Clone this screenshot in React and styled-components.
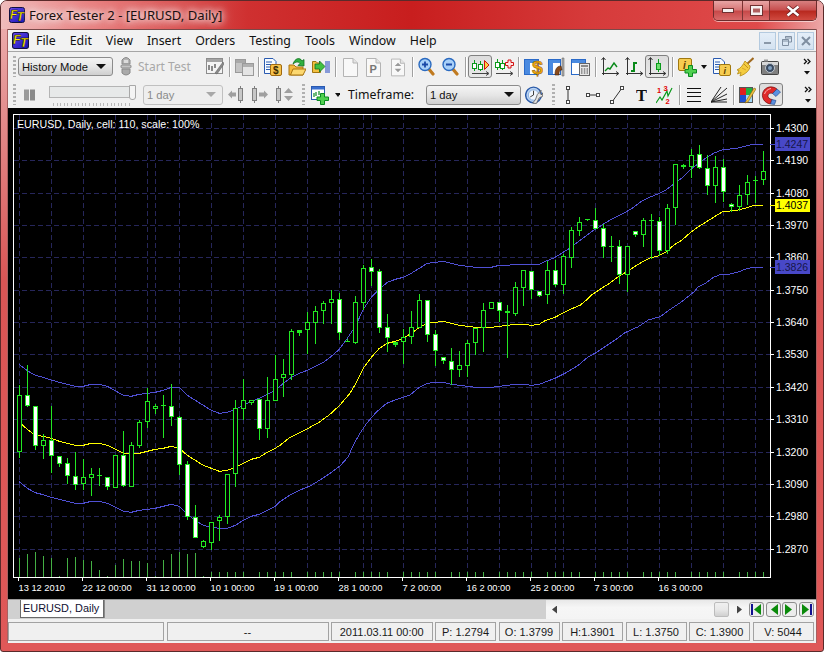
import React from "react";
import styled, { createGlobalStyle } from "styled-components";

const Global = createGlobalStyle`
  html, body { margin: 0; padding: 0; background: #fff; overflow: hidden; }
  * { box-sizing: border-box; }
`;

const UI = `"Noto Sans", "Open Sans", sans-serif`;
const ARIAL = `"Liberation Sans", Arial, sans-serif`;

const Window = styled.div`
  width: 824px; height: 652px; padding: 0 7px 8px; display: flex; flex-direction: column;
  border: 1px solid #5a2a2a; border-radius: 7px 7px 3px 3px; overflow: hidden;
  background: linear-gradient(180deg, #eeb4b4 0, #e28a8a 120px, #d95555 280px, #df5858 100%);
`;
const TitleBar = styled.div`
  height: 28px; flex: none; margin: 0 -7px; padding: 0 0 0 8px; display: flex; align-items: flex-start;
  background: linear-gradient(90deg, #efbcbc 0, #e88080 11%, #cf3030 30%, #c81e1e 50%, #d63b3b 72%, #df4a4a 92%, #eca8a8 100%);
`;
const TitleLogo = styled.div` margin-top: 6px; width: 16px; height: 16px; flex: none; `;
const TitleText = styled.div`
  margin: 5px 0 0 4px; font: 13.1px ${UI}; color: #1a1010; white-space: nowrap; flex: 1;
  text-shadow: 0 0 6px #fff, 0 0 10px #fff, 0 0 14px #fff;
`;
const Controls = styled.div`
  display: flex; height: 20px; margin-right: 6px; border: 1px solid #6d2b2b; border-top: none;
  border-radius: 0 0 5px 5px; overflow: hidden; box-shadow: 0 1px 0 rgba(255,255,255,.55);
`;
const CtrlBtn = styled.div`
  width: ${p => p.$w}px; display: flex; align-items: center; justify-content: center;
  border-left: ${p => (p.$first ? "none" : "1px solid #7b3333")};
  background: ${p => p.$close
    ? "linear-gradient(180deg,#d88080 0,#c85050 45%,#b92a20 55%,#d04a40 100%)"
    : "linear-gradient(180deg,#e8a5a5 0,#d87878 45%,#c84a4a 55%,#d86a6a 100%)"};
`;
const Client = styled.div`
  flex: 1; display: flex; flex-direction: column; background: #f0f0f0; min-height: 0;
  border: 1px solid #7a4a4a; border-width: 1px 0 0 0; width: 808px; margin-left: 0;
  box-shadow: -1px 0 0 #a86060, 1px 0 0 #a86060;
`;
const MenuBar = styled.div`
  height: 22px; flex: none; display: flex; align-items: center; padding: 0 2px 0 4px;
  background: #f2f2f2; border-bottom: 1px solid #a6a6a6;
`;
const MenuLogo = styled.div` width: 17px; height: 17px; flex: none; `;
const MenuItem = styled.div` padding: 0 7px; font: 12.35px ${UI}; color: #111; `;
const MdiGroup = styled.div` margin-left: auto; display: flex; gap: 2px; `;
const MdiBtn = styled.div`
  width: 17px; height: 18px; display: flex; align-items: center; justify-content: center;
  background: linear-gradient(180deg,#e4eef8,#d4e2f0); border: 1px solid #b4cadf;
`;
const Toolbar = styled.div`
  height: ${p => p.$h}px; flex: none; display: flex; align-items: center; padding-left: 5px; background: #f0f0f0;
`;
const Slot = styled.div`
  flex: none; width: ${p => p.$w}px; height: 100%; margin-left: ${p => p.$ml || 0}px;
  display: flex; align-items: center; justify-content: center;
`;
const Pressed = styled.div`
  flex: none; width: 24px; height: 23px; margin-left: ${p => p.$ml || 0}px; display: flex; align-items: center; justify-content: center;
  border: 1.5px solid #808080; border-radius: 3px; background: linear-gradient(180deg,#dcdcdc,#e8e8e8);
`;
const Sep = styled.div`
  flex: none; width: 1px; height: 20px; margin-left: ${p => p.$ml || 0}px; background: #a0a0a0; box-shadow: 1px 0 0 #fff;
`;
const Grip = styled.div`
  flex: none; width: 3px; height: 21px; margin-left: ${p => p.$ml || 0}px;
  background: repeating-linear-gradient(180deg,#b0b0b0 0,#b0b0b0 2px,transparent 2px,transparent 4px);
`;
const Combo = styled.div`
  flex: none; width: ${p => p.$w}px; height: ${p => p.$h}px; margin-left: ${p => p.$ml || 0}px;
  display: flex; align-items: center; justify-content: space-between; padding: 0 6px 0 3px;
  border: 1px solid ${p => (p.$off ? "#c0c0c0" : "#8c8c8c")}; border-radius: 3px;
  background: ${p => (p.$off ? "#eeeeee" : "linear-gradient(180deg,#f4f4f4 0,#e6e6e6 50%,#cfcfcf 100%)")};
  font: 11.2px ${ARIAL}; color: ${p => (p.$off ? "#8a8a8a" : "#111")};
`;
const ComboArrow = styled.span`
  width: 0; height: 0; border: 4px solid transparent; border-bottom: none;
  border-left-width: 5px; border-right-width: 5px; border-top: 5px solid ${p => (p.$off ? "#a8a8a8" : "#111")};
`;
const ToolLabel = styled.div`
  flex: none; width: ${p => p.$w}px; margin-left: ${p => p.$ml}px; font: ${p => p.$size}px ${UI};
  color: ${p => p.$color}; white-space: nowrap;
`;
const SliderBox = styled.div`
  position: relative; flex: none; width: 87px; height: 26px; margin-left: 14px;
`;
const SliderTrack = styled.div`
  position: absolute; left: 0; right: 0; top: 4px; height: 12px; background: #e7e9e9; border: 1px solid #b4b4b4;
`;
const SliderThumb = styled.div`
  position: absolute; right: 0; top: 3px; width: 7px; height: 15px; background: #f4f4f4;
  border: 1px solid #a8a8a8; border-radius: 0 0 3px 3px;
`;
const SliderTicks = styled.div`
  position: absolute; left: 4px; right: 4px; top: 21px; height: 3px;
  background: repeating-linear-gradient(90deg,#b8b8b8 0,#b8b8b8 1px,transparent 1px,transparent 3.6px);
`;
const ChartPane = styled.div` height: 491px; flex: none; background: #000; `;
const ChartSvg = styled.svg`
  display: block; font-family: ${ARIAL};
`;
const TabRow = styled.div`
  height: 20px; flex: none; display: flex; border-top: 1px solid #9c9c9c;
`;
const TabStrip = styled.div` width: 538px; background: #d0d0d0; padding-left: 12px; flex: none; `;
const Tab = styled.div`
  width: 84px; height: 18px; background: #fff; border: 1px solid #6a6a6a; border-top: none; padding-left: 2px;
  font: 10.9px/17px ${ARIAL}; color: #101030; box-shadow: 1px 0 0 #8a8a8a; white-space: nowrap;
`;
const ScrollTrack = styled.div`
  flex: 1; display: flex; align-items: center; padding: 0 0 0 6px;
  background: linear-gradient(180deg,#e8e8e8,#f6f6f6 40%,#f4f4f4);
`;
const ArrowBtn = styled.div`
  flex: none; width: 5px; height: 8px; background: ${p => p.$c || "#444"};
  clip-path: polygon(${p => (p.$dir === "l" ? "100% 0,100% 100%,0 50%" : "0 0,0 100%,100% 50%")});
  margin-left: ${p => p.$ml || 0}px;
`;
const ScrollThumb = styled.div`
  flex: none; width: 15px; height: 15px; margin-left: 157px; border: 1px solid #bcbcbc; border-radius: 2px;
  background: linear-gradient(180deg,#f0f0f0 0,#e8e8e8 50%,#d0d0d0 100%);
`;
const NavBtn = styled.div`
  flex: none; width: 15px; height: 15px; margin-left: ${p => p.$ml ?? 1.5}px; border: 1px solid #8c8c8c; border-radius: 3px;
  background: #ececec; display: flex; align-items: center; justify-content: center;
`;
const StatusBar = styled.div`
  margin-top: 3px; height: 19px; flex: none; display: flex; gap: 2.5px; padding-right: 1px;
`;
const Pane = styled.div`
  flex: none; width: ${p => p.$w}px; height: 19px; border: 1px solid #a2a2a2; background: #f0f0f0;
  display: flex; align-items: center; justify-content: center; font: 11px ${ARIAL}; color: #1a1a1a; white-space: nowrap;
`;

/* ---------- icons ---------- */
const Ic = ({ w, h = 20, children }) => (
  <svg width={w} height={h} viewBox={`0 0 ${w} ${h}`} style={{ display: "block" }}>{children}</svg>
);
const Logo = ({ s }) => (
  <svg width={s} height={s} viewBox="0 0 16 16" style={{ display: "block" }}>
    <defs><linearGradient id={`lg${s}`} x1="0" y1="0" x2="1" y2="1"><stop offset="0" stopColor="#6a4af0" /><stop offset="1" stopColor="#1212b0" /></linearGradient></defs>
    <rect x=".5" y=".5" width="15" height="15" rx="2" fill={`url(#lg${s})`} stroke="#101040" />
    <text x="1" y="11.5" fontFamily={ARIAL} fontWeight="700" fontStyle="italic" fontSize="12" fill="#ffee00" stroke="#000" strokeWidth=".4">F</text>
    <text x="7.5" y="14" fontFamily={ARIAL} fontWeight="700" fontStyle="italic" fontSize="12" fill="#ffee00" stroke="#000" strokeWidth=".4">T</text>
  </svg>
);
const Stopper = () => (
  <Ic w={14} h={22}>
    <path d="M3 4 Q7 -1 11 4 L11 8 L3 8Z" fill="#b4b4b4" stroke="#888" />
    <rect x="2" y="9" width="10" height="3" rx="1" fill="#c4c4c4" stroke="#8c8c8c" />
    <path d="M3 13 L11 13 L11 17 Q7 21 3 17Z" fill="#aaa" stroke="#888" />
    <rect x="5" y="4" width="4" height="3" fill="#dcdcdc" />
  </Ic>
);
const ChartEdit = () => (
  <Ic w={18}>
    <rect x=".5" y="1.5" width="16" height="15" fill="#f4f4f4" stroke="#8c8c8c" />
    <rect x="1" y="2" width="15" height="3" fill="#a4a4a4" />
    <path d="M3 13 V8 M6 14 V9 M9 11 V7" stroke="#666" strokeWidth="1.5" />
    <path d="M9 16 L17 5 L18 7 L11 17Z" fill="#8a8a8a" stroke="#666" strokeWidth=".6" />
  </Ic>
);
const GrayWindows = () => (
  <Ic w={19}>
    <rect x=".5" y="2.5" width="10" height="13" fill="#c4c4c4" stroke="#9a9a9a" />
    <rect x="7.5" y="6.5" width="11" height="12" fill="#e4e4e4" stroke="#9a9a9a" />
    <rect x="1" y="3" width="9" height="3" fill="#a8a8a8" /><rect x="8" y="7" width="10" height="3" fill="#b0b0b0" />
  </Ic>
);
const DocDollar = () => (
  <Ic w={19}>
    <path d="M1.5 1.5 H10 L13 4.5 V16.5 H1.5Z" fill="#f6fbff" stroke="#2a5ab0" />
    <path d="M3 5 H9 M3 7.5 H8 M3 10 H7 M3 12.5 H7" stroke="#2a5ab0" />
    <rect x="7.5" y="7.5" width="11" height="11" rx="1.5" fill="#f6c24c" stroke="#a06a10" />
    <text x="10" y="16.5" fontFamily={ARIAL} fontWeight="700" fontSize="10" fill="#3a2a00">$</text>
  </Ic>
);
const FolderArrow = () => (
  <Ic w={18} h={20}>
    <path d="M1 8 H6 L8 10 H15 V18 H1Z" fill="#f4b83c" stroke="#a87410" />
    <path d="M2.5 18 L5 12 H18 L15 18Z" fill="#fcd870" stroke="#a87410" />
    <path d="M5 7 C7 1 12 0 14 4 L16 2.5 L16 9 L10 8.5 L12 6.5 C10.5 4.5 8 4.5 5 7Z" fill="#30b040" stroke="#107020" strokeWidth=".8" />
  </Ic>
);
const FolderBars = () => (
  <Ic w={18} h={16}>
    <path d="M.5 2.5 H4 L5.5 4 H8.5 V13.5 H.5Z" fill="#f2c040" stroke="#a07410" />
    <path d="M3 5 H7.5 V2 L13 7.5 L7.5 13 V10 H3Z" fill="#40c040" stroke="#107020" strokeWidth=".8" />
    <path d="M14 2 V14 M16 2 V14 M18 2 V14" stroke="#4060c8" strokeWidth="1.2" />
  </Ic>
);
const GrayDoc = ({ children }) => (
  <Ic w={15}>
    <path d="M.5 1.5 H10 L14.5 6 V19.5 H.5Z" fill="#f8f8f8" stroke="#b4b4b4" />
    <path d="M10 1.5 V6 H14.5" fill="#e4e4e4" stroke="#b4b4b4" />
    {children}
  </Ic>
);
const Magnifier = ({ plus }) => (
  <Ic w={17} h={19}>
    <path d="M10 11 L15 17" stroke="#c07a20" strokeWidth="3.2" strokeLinecap="round" />
    <circle cx="7" cy="7.5" r="6" fill="#a8d0f8" stroke="#2a6ac0" strokeWidth="1.4" />
    <path d="M4 7.5 H10" stroke="#1a4aa8" strokeWidth="1.8" />
    {plus && <path d="M7 4.5 V10.5" stroke="#1a4aa8" strokeWidth="1.8" />}
  </Ic>
);
const Cndl = ({ x, t, b, wt, wb, c = "#0a9a1a", fill }) => (
  <g>
    <path d={`M${x} ${wt} V${wb}`} stroke={c} />
    <rect x={x - 2} y={t} width="4" height={b - t} fill={fill || "#fff"} stroke={c} />
  </g>
);
const PlayChart = () => (
  <Ic w={19} h={19}>
    <Cndl x={3.5} t={6.5} b={11.5} wt={3} wb={14} /><Cndl x={9.5} t={7.5} b={12.5} wt={4} wb={14} />
    <path d="M13.5 3.5 L18 8 L13.5 12.5Z" fill="#ffd040" stroke="#d01010" />
    <path d="M1 16.5 H17 M15 14.5 L18 16.5 L15 18.5" stroke="#444" fill="none" />
  </Ic>
);
const PlusChart = () => (
  <Ic w={19} h={19}>
    <Cndl x={2.5} t={5.5} b={10.5} wt={2} wb={13} /><Cndl x={7.5} t={6.5} b={11.5} wt={3} wb={13} />
    <path d="M13 3 H16 V5.5 H18.5 V8.5 H16 V11 H13 V8.5 H10.5 V5.5 H13Z" fill="#ffe0e0" stroke="#d01010" />
    <path d="M1 16.5 H17 M15 14.5 L18 16.5 L15 18.5" stroke="#444" fill="none" />
  </Ic>
);
const DollarWin = () => (
  <Ic w={19}>
    <rect x=".5" y="2.5" width="14" height="15" fill="#fff" stroke="#2a6ac8" />
    <rect x="1" y="3" width="13" height="3" fill="#4a8ae0" />
    <rect x="1" y="6" width="5" height="11" fill="#4a8ae0" />
    <text x="8" y="17" fontFamily={ARIAL} fontWeight="700" fontSize="19" fill="#f0a810" stroke="#8a5a00" strokeWidth=".5" textLength="11" lengthAdjust="spacingAndGlyphs">$</text>
  </Ic>
);
const ToolWin = () => (
  <Ic w={18}>
    <rect x=".5" y="2.5" width="12" height="15" fill="#fff" stroke="#2a6ac8" />
    <rect x="1" y="3" width="11" height="3" fill="#4a8ae0" /><rect x="1" y="6" width="4" height="11" fill="#4a8ae0" />
    <path d="M14 1 H16 V19 H14Z" fill="#b0b0b0" stroke="#555" strokeWidth=".5" />
    <path d="M7 18 C7 12 9 9 13 9 L14 13 C11 13 11 15 11 18Z" fill="#8a4a1a" stroke="#402008" strokeWidth=".6" />
  </Ic>
);
const CalcWin = () => (
  <Ic w={19}>
    <rect x=".5" y="2.5" width="14" height="15" fill="#fff" stroke="#2a6ac8" />
    <rect x="1" y="3" width="13" height="3" fill="#4a8ae0" />
    <rect x="8.5" y="6.5" width="10" height="12" fill="#e8e8e8" stroke="#666" />
    <rect x="10" y="8" width="7" height="2" fill="#8a8a8a" />
    <path d="M10 12 H11.5 M12.8 12 H14.3 M15.6 12 H17 M10 14 H11.5 M12.8 14 H14.3 M15.6 14 H17 M10 16 H11.5 M12.8 16 H14.3 M15.6 16 H17" stroke="#444" />
  </Ic>
);
const Axes = ({ w = 18, children }) => (
  <Ic w={w} h={19}>
    <path d="M2.5 18 V1 M.5 3 L2.5 .5 L4.5 3 M1 16.5 H17.5 M15 14.5 L17.8 16.5 L15 18.5" stroke="#333" fill="none" />
    {children}
  </Ic>
);
const InfoBox = () => (
  <Ic w={19}>
    <rect x=".5" y="1.5" width="13" height="12" rx="1.5" fill="#f6cc50" stroke="#a07810" />
    <text x="5" y="11.5" fontFamily={ARIAL} fontWeight="700" fontStyle="italic" fontSize="10" fill="#5a4000">i</text>
    <path d="M10.5 8.5 H14.5 V12.5 H18.5 V16 H14.5 V19.5 H10.5 V16 H7 V12.5 H10.5Z" fill="#50d050" stroke="#0a8a20" />
  </Ic>
);
const DocInfo = () => (
  <Ic w={18}>
    <path d="M.5 1.5 H8 L11.5 5 V16.5 H.5Z" fill="#f6fbff" stroke="#2a5ab0" />
    <path d="M2 5 H7 M2 7.5 H7 M2 10 H6 M2 12.5 H6" stroke="#2a5ab0" />
    <rect x="6.5" y="7.5" width="11" height="11" rx="1.5" fill="#f6cc50" stroke="#a07810" />
    <text x="10.5" y="16.5" fontFamily={ARIAL} fontWeight="700" fontStyle="italic" fontSize="9" fill="#5a4000">i</text>
  </Ic>
);
const Broom = () => (
  <Ic w={17}>
    <path d="M16.5 1 L10 7" stroke="#a06a20" strokeWidth="2" />
    <path d="M8 4 L13 9 C13 13 9 17 3 19 L4 15.5 L0.5 17 L2 13.5 L0 13 C4 11 6 8 8 4Z" fill="#f4cc40" stroke="#b48a10" strokeWidth=".8" />
    <path d="M7 7 L11 11" stroke="#c09020" />
    <path d="M5 11 L9 13" stroke="#d8a828" />
  </Ic>
);
const Camera = () => (
  <Ic w={18}>
    <rect x=".5" y="4.5" width="17" height="13" rx="1" fill="#808080" stroke="#444" />
    <rect x="1" y="5" width="16" height="3" fill="#d8d8d8" />
    <circle cx="9" cy="11" r="4.5" fill="#3a4a60" stroke="#c0c8d0" />
    <circle cx="9" cy="11" r="2" fill="#80a0c0" />
    <rect x="3" y="2.5" width="4" height="2" fill="#999" />
  </Ic>
);
const Chevrons = () => (
  <Ic w={8} h={22}>
    <path d="M1 3 L3.5 5.5 L1 8 M4.5 3 L7 5.5 L4.5 8" stroke="#111" strokeWidth="1.3" fill="none" />
    <path d="M1 15 H7 L4 18.5Z" fill="#111" />
  </Ic>
);
const PauseIc = () => (
  <Ic w={11} h={12}><rect width="5" height="11" y=".5" fill="#9a9a9a" /><rect x="6" width="5" height="11" y=".5" fill="#8a8a8a" /></Ic>
);
const GrayC = ({ x }) => <rect x={x + .5} y="3.5" width="4" height="12" fill="#c8c8c8" stroke="#808080" />;
const StepLeft = () => (
  <Ic w={16}><path d="M0 9.5 L4 5.5 V7.5 H8 V11.5 H4 V13.5Z" fill="#a0a0a0" /><path d="M12.5 1 V18" stroke="#808080" /><GrayC x={10} /></Ic>
);
const StepRight = () => (
  <Ic w={16}><path d="M2.5 1 V18" stroke="#808080" /><GrayC x={0} /><path d="M16 9.5 L12 5.5 V7.5 H7 V11.5 H12 V13.5Z" fill="#a0a0a0" /></Ic>
);
const StepUpDown = () => (
  <Ic w={17}><path d="M2.5 1 V18" stroke="#808080" /><GrayC x={0} /><path d="M8 8 L12.5 3 L17 8Z M8 11 L12.5 16 L17 11Z" fill="#a0a0a0" /></Ic>
);
const ChartPlus = () => (
  <Ic w={18}>
    <rect x=".5" y="1.5" width="13" height="13" fill="#fff" stroke="#2a5ab0" />
    <rect x="1" y="2" width="12" height="2.5" fill="#3a70d0" />
    <path d="M3 12 V8 M5 11 V7 M8 10 V6" stroke="#0a8a20" strokeWidth="1.2" />
    <path d="M9.5 8.5 H13.5 V12 H17.5 V15.5 H13.5 V19.5 H9.5 V15.5 H6 V12 H9.5Z" fill="#50d050" stroke="#0a8a20" />
  </Ic>
);
const ClockTool = () => (
  <Ic w={19}>
    <circle cx="9" cy="10" r="8.3" fill="#b8d2f2" stroke="#2a5aa8" strokeWidth="1.5" />
    <circle cx="9" cy="10" r="5.5" fill="#f0f6fd" stroke="#8ab0e0" />
    <path d="M9 5.5 V10 L5.5 12" stroke="#333" fill="none" />
    <path d="M8 18.5 L11 15 L13 9.5 L17 5 L16 8.5 L17.5 10 L19 7.5 L18.5 11.5 L15 13 L12 19Z" fill="#e4e4e4" stroke="#505050" strokeWidth=".8" />
  </Ic>
);
const Handle = ({ x, y }) => <rect x={x - 1.5} y={y - 1.5} width="3" height="3" fill="#fff" stroke="#444" />;
const VLine = () => <Ic w={12}><path d="M6 3 V17" stroke="#333" /><Handle x={6} y={3} /><Handle x={6} y={17} /></Ic>;
const HLine = () => <Ic w={14}><path d="M2 10 H12" stroke="#333" /><Handle x={2} y={10} /><Handle x={12} y={10} /></Ic>;
const Trend = () => <Ic w={14}><path d="M2 17 L12 3" stroke="#333" /><Handle x={2} y={17} /><Handle x={12} y={3} /></Ic>;
const TTool = () => <Ic w={11} h={18}><text x="0" y="15" fontFamily={`"Liberation Serif", serif`} fontWeight="700" fontSize="16.5" fill="#111">T</text></Ic>;
const Fibo = () => (
  <Ic w={17}>
    <path d="M0 18 L4 12 L6 15 L11 6 L12 11 L16 3" stroke="#0a9a1a" strokeWidth="1.2" fill="none" />
    <text x="1" y="8" fontFamily={ARIAL} fontWeight="700" fontSize="7.5" fill="#e00000">1</text>
    <text x="7.5" y="6" fontFamily={ARIAL} fontWeight="700" fontSize="7.5" fill="#e00000">3</text>
    <text x="9.5" y="19" fontFamily={ARIAL} fontWeight="700" fontSize="7.5" fill="#e00000">2</text>
  </Ic>
);
const HLines = () => <Ic w={14}><path d="M0 3.5 H14 M0 7.5 H14 M0 11.5 H14 M0 16.5 H14" stroke="#111" /></Ic>;
const Fan = () => <Ic w={16}><path d="M0 17 L16 3 M0 17 L16 9 M0 17 L16 14 M0 17 H16 M0 17 L10 2" stroke="#222" /></Ic>;
const Paint = () => (
  <Ic w={17}>
    <rect x=".5" y="2.5" width="13" height="15" fill="#f0f0f0" stroke="#555" />
    <rect x="1" y="3" width="6" height="7" fill="#e02020" /><rect x="7" y="3" width="6" height="7" fill="#20b040" />
    <rect x="1" y="10" width="6" height="7" fill="#2050d0" /><rect x="7" y="10" width="6" height="7" fill="#a0d8f8" />
    <path d="M7 16 L15 3 L17 4 L9 17 L6 18Z" fill="#f0c040" stroke="#806010" strokeWidth=".6" />
  </Ic>
);
const Magnet = () => (
  <Ic w={20}>
    <path d="M9.5 19 C3 18 0 12 2 7 C4 2 11 0 16 4 L11.5 8.5 C9.5 7.5 7.5 8.5 7 10 C6.5 12 8 14 11 14.5Z" fill="#e02828" stroke="#701010" strokeWidth=".7" />
    <path d="M11.5 8.5 L16 4 L19.5 7 L15 11.5Z" fill="#5a90e0" stroke="#204080" strokeWidth=".6" />
    <path d="M11 14.5 L9.5 19 L13.5 19.5 L15 15.5Z" fill="#5a90e0" stroke="#204080" strokeWidth=".6" />
    <path d="M3.5 9 C4.5 6 7 4 10 3.5" stroke="#ffb0b0" fill="none" />
  </Ic>
);
const NavIcon = ({ dir, bar }) => (
  <Ic w={13} h={13}>
    {bar && <rect x={dir === "l" ? 1 : 10} y="1" width="2" height="11" fill="#101090" />}
    <path d={dir === "l" ? "M11 1 V12 L4 6.5Z" : "M2 1 V12 L9 6.5Z"} fill="#0a8a0a" />
  </Ic>
);

/* ---------- chart data, read off the picture in zoomed coordinates ---------- */
const C5 = [[132,166,334,352,"h"],[72,166,196,198,"w"],[198,199,314,326,"w"],[280,301,314,354,"h"],[195,301,344,396,"w"],[349,349,368,378,"w"],[351,370,406,430,"w"],[333,409,431,446,"w"],[354,412,428,446,"h"],[381,403,410,465,"h"],[381,406,406,435,"f"],[408,412,439,446,"w"],[346,346,440,440,"h"],[270,346,434,438,"w"],[304,316,437,438,"h"],[238,247,314,320,"h"],[141,184,244,262,"h"],[190,199,205,220,"h"],[162,196,196,290,"f"],[129,199,229,255,"w"],[225,232,373,402,"w"],[360,373,529,538,"w"],[492,532,592,592,"w"],[598,604,619,622,"h"],[547,547,607,628,"h"],[522,532,541,600,"h"],[403,403,529,549,"h"],[178,205,400,438,"h"],[114,181,203,237,"h"],[178,179,186,192,"h"],[178,178,265,297,"w"],[108,181,265,291,"h"]];
const C6 = [[343,418,479,481,"h"],[354,403,412,468,"h"],[265,274,401,418,"h"],[271,271,275,284,"s"],[213,247,268,340,"h"],[195,214,245,308,"h"],[181,190,211,250,"h"],[148,178,187,250,"h"],[156,178,275,297,"w"],[295,303,303,304,"f"],[166,187,305,310,"h"],[72,85,185,206,"h"],[54,82,92,135,"w"],[84,94,262,276,"w"],[220,262,292,333,"w"],[306,307,312,318,"s"],[264,292,304,368,"h"],[210,262,289,309,"h"],[159,181,260,262,"h"],[181,181,281,303,"w"],[267,283,329,375,"w"],[348,352,361,368,"w"],[321,364,388,432,"w"],[331,376,388,408,"h"],[297,310,374,408,"h"],[264,265,307,343,"h"],[186,211,262,333,"h"],[187,187,203,205,"h"],[183,187,211,244,"w"],[192,214,217,351,"s"],[124,142,218,225,"h"],[88,91,140,195,"h"],[90,94,148,175,"w"]];
const C7 = [[524,527,539,542,"w"],[435,466,538,565,"h"],[432,466,506,514,"w"],[415,424,506,534,"h"],[334,346,425,456,"h"],[304,322,344,360,"h"],[310,313,313,316,"f"],[276,316,338,340,"w"],[323,340,394,426,"w"],[360,394,394,437,"f"],[372,394,478,504,"w"],[394,394,478,527,"h"],[349,349,358,362,"w"],[306,316,358,393,"h"],[294,316,316,428,"f"],[304,319,406,420,"w"],[265,280,406,414,"h"],[148,148,277,327,"h"],[145,151,154,160,"s"],[99,121,154,186,"h"],[87,118,157,160,"w"],[118,160,211,237,"w"],[121,157,211,260,"h"],[129,157,227,259,"w"],[262,268,274,288,"w"],[208,241,274,286,"h"],[178,202,238,268,"h"],[181,196,196,262,"f"],[105,169,193,207,"h"]];
const G = (oy, list) => list.map(([a, b, c, d, k]) => ({ wt: oy + a / 3, t: oy + b / 3, b: oy + c / 3, wb: oy + d / 3, k }));
const candles = [...G(340, C5), ...G(240, C6), ...G(115, C7)];

const P = (ox, oy, pts) => pts.map(([x, y]) => `${(ox + x / 3).toFixed(1)},${(oy + y / 3).toFixed(1)}`);
const upper = [
  ...P(10, 340, [[28,74],[52,92],[76,106],[100,112],[124,120],[148,127],[172,133],[196,139],[220,139],[244,133],[268,133],[292,139],[316,152],[340,166],[364,169],[388,163],[412,160],[436,157],[460,151],[484,142],[508,142],[532,166],[556,181],[580,196],[604,211],[628,220],[652,217],[676,208],[700,196],[724,184],[748,175],[772,163],[796,151]]),
  ...P(270, 240, [[40,430],[64,412],[88,400],[112,391],[136,379],[160,367],[184,349],[208,328],[232,295],[256,259],[280,208],[304,172],[328,148],[352,127],[376,118],[400,112],[424,100],[448,85],[472,70],[496,67],[520,64],[544,70],[568,76],[592,79],[616,82],[640,82],[664,82],[688,76],[712,76],[736,73],[760,73],[784,73],[808,73]]),
  ...P(530, 115, [[48,438],[72,429],[96,414],[120,399],[144,381],[168,363],[192,345],[216,330],[240,315],[264,303],[288,291],[312,276],[336,258],[360,246],[384,237],[408,225],[432,207],[456,189],[480,165],[504,147],[528,129],[552,114],[576,105],[600,102],[624,99],[648,93],[672,87],[700,87]]),
].join(" ");
const middle = [
  ...P(10, 340, [[28,247],[52,268],[76,286],[100,289],[124,295],[148,304],[172,310],[196,316],[220,316],[244,310],[268,310],[292,316],[316,328],[340,340],[364,343],[388,340],[412,334],[436,328],[460,325],[484,319],[508,325],[532,346],[556,361],[580,376],[604,385],[628,394],[652,391],[676,382],[700,370],[724,358],[748,352],[772,337],[796,325],[810,316]]),
  ...P(270, 390, [[60,142],[90,128],[120,112],[150,95],[180,73],[210,45],[240,10]]),
  ...P(270, 240, [[256,433],[280,385],[304,352],[328,325],[352,310],[376,304],[400,295],[424,280],[448,262],[472,250],[496,247],[520,244],[544,250],[568,256],[592,259],[616,262],[640,262],[664,262],[688,259],[712,256],[736,253],[760,253],[784,256],[808,253]]),
  ...P(535, 290, [[30,92],[60,82],[90,66],[120,52],[135,46],[150,34],[170,15],[192,0]]),
  ...P(530, 115, [[216,519],[240,504],[264,486],[288,471],[312,456],[336,441],[360,429],[384,423],[408,411],[432,390],[456,375],[480,354],[504,336],[528,321],[552,306],[576,291],[600,288],[624,285],[648,279],[672,271],[700,270]]),
].join(" ");
const lower = [
  ...P(10, 340, [[28,425],[52,445],[76,458],[100,464],[124,472],[148,478],[172,484],[196,490],[220,490],[244,484],[268,484],[292,490],[316,502],[340,514],[364,517],[388,511],[412,508],[436,505],[460,499],[484,493],[508,499],[532,523],[556,541],[580,556],[604,562],[628,565],[652,565],[676,556],[700,541],[724,529],[748,523],[772,511],[796,499]]),
  ...P(270, 390, [[30,335],[60,315],[90,300],[120,288],[150,270],[180,250],[210,228],[235,200],[250,165],[270,130],[290,100],[320,65],[350,40],[380,28],[420,15]]),
  ...P(270, 240, [[448,442],[472,430],[496,427],[520,427],[544,433],[568,436],[592,439],[616,442],[640,442],[664,442],[688,439],[712,436],[736,433],[760,433],[784,436],[808,433]]),
  ...P(535, 290, [[60,265],[90,250],[130,226],[160,200],[180,190],[210,170],[240,150],[270,128],[310,110],[340,90],[375,80],[400,62],[440,35],[480,3]]),
  ...P(530, 115, [[504,516],[528,504],[552,486],[576,477],[600,477],[624,471],[648,462],[672,456],[700,456]]),
].join(" ");

const volTops = [69,57,51,63,69,124,69,66,75,78,105,123,90,72,78,78,84,124,75,57,51,57,54,124];
const GREEN = "#22e822";
const prices = ["1.4300","1.4190","1.4080","1.3970","1.3860","1.3750","1.3640","1.3530","1.3420","1.3310","1.3200","1.3090","1.2980","1.2870"];
const gridY = prices.map((_, i) => Math.floor(128.3 + i * 32.38) + .5);
const gridX = [...Array.from({ length: 24 }, (_, k) => 19.5 + 32 * k), 155.5, 363.5, 555.5];
const dates = ["13 12 2010","22 12 00:00","31 12 00:00","10 1 00:00","19 1 00:00","28 1 00:00","7 2 00:00","16 2 00:00","25 2 00:00","7 3 00:00","16 3 00:00"];
const snap = v => Math.round(v) + .5;

const Chart = () => (
  <ChartSvg width="808" height="491" viewBox="8 108 808 491">
    <g stroke="#26265a" strokeDasharray="5 3" shapeRendering="crispEdges">
      {gridY.map(y => <line key={y} x1="14" x2="770" y1={y} y2={y} />)}
      {gridX.map(x => <line key={x} x1={x} x2={x} y1="115" y2="577" />)}
    </g>
    <g stroke="#44b044" shapeRendering="crispEdges">
      {candles.map((_, i) => {
        if (i % 6 === 5 && i > 23) return null;
        const top = i < volTops.length ? 535 + volTops[i] / 3 : 572;
        const x = 19.5 + 8 * i;
        return <line key={i} x1={x} x2={x} y1={top} y2="577" />;
      })}
    </g>
    <polyline points={upper} fill="none" stroke="#5050d4" shapeRendering="crispEdges" />
    <polyline points={lower} fill="none" stroke="#5050d4" shapeRendering="crispEdges" />
    <polyline points={middle} fill="none" stroke="#ffff00" shapeRendering="crispEdges" />
    <g shapeRendering="crispEdges">
      {candles.map((c, i) => {
        const x = 19.5 + 8 * i;
        const t = snap(c.t), b = snap(c.b);
        return (
          <g key={i}>
            <line x1={x} x2={x} y1={snap(c.wt)} y2={snap(c.wb)} stroke={GREEN} />
            {c.k === "f"
              ? <line x1={x - 2.5} x2={x + 2.5} y1={t} y2={t} stroke={GREEN} />
              : <rect x={x - 2} y={t} width="4" height={Math.max(b - t, 1)} stroke={GREEN}
                  fill={c.k === "h" ? "#000" : c.k === "w" ? "#fff" : GREEN} />}
          </g>
        );
      })}
    </g>
    <path d="M13.5 577.5 V114.5 H770.5 V577.5 H13.5" fill="none" stroke="#fff" shapeRendering="crispEdges" />
    <g stroke="#fff" shapeRendering="crispEdges">
      {gridY.map(y => <line key={y} x1="770" x2="774" y1={y} y2={y} />)}
      {dates.map((_, i) => <line key={i} x1={18.5 + 64 * i} x2={18.5 + 64 * i} y1="577" y2="581" />)}
    </g>
    <g fill="#fff" fontSize="10.5">
      <text x="17" y="128" fontSize="10.65">EURUSD, Daily, cell: 110, scale: 100%</text>
      {prices.map((p, i) => <text key={p} x="776" y={gridY[i] + 3.5}>{p}</text>)}
    </g>
    <g fill="#fff">
      {dates.map((d, i) => <text key={d} x={18.5 + 64 * i} y="591" fontSize="9.3">{d}</text>)}
    </g>
    <g shapeRendering="crispEdges">
      <rect x="775" y="137" width="35" height="14" fill="#4848c8" />
      <line x1="770" x2="775" y1="144.5" y2="144.5" stroke="#4848c8" />
      <rect x="775" y="199" width="35" height="13" fill="#ffff00" />
      <line x1="770" x2="775" y1="205.5" y2="205.5" stroke="#ffff00" />
      <rect x="775" y="260" width="35" height="14" fill="#4848c8" />
      <line x1="770" x2="775" y1="267.5" y2="267.5" stroke="#4848c8" />
    </g>
    <g fontSize="10.5">
      <text x="776" y="148" fill="#16164a">1.4247</text>
      <text x="776" y="209" fill="#000">1.4037</text>
      <text x="776" y="271" fill="#16164a">1.3826</text>
    </g>
  </ChartSvg>
);

export default function App() {
  return (
    <>
      <Global />
      <Window>
        <TitleBar>
          <TitleLogo><Logo s={16} /></TitleLogo>
          <TitleText>Forex Tester 2 - [EURUSD, Daily]</TitleText>
          <Controls>
            <CtrlBtn $w={28} $first>
              <svg width="12" height="5"><rect x=".5" y=".5" width="11" height="4" fill="#f4f0f0" stroke="#703030" /></svg>
            </CtrlBtn>
            <CtrlBtn $w={27}>
              <svg width="13" height="11"><rect x=".5" y=".5" width="12" height="10" fill="#f4f0f0" stroke="#703030" /><rect x="3" y="3.5" width="7" height="4" fill="#b06060" /></svg>
            </CtrlBtn>
            <CtrlBtn $w={47} $close>
              <svg width="16" height="12"><path d="M2.5 1.5 L13.5 10.5 M13.5 1.5 L2.5 10.5" stroke="#6a2020" strokeWidth="4" /><path d="M2.5 1.5 L13.5 10.5 M13.5 1.5 L2.5 10.5" stroke="#fff" strokeWidth="2.4" /></svg>
            </CtrlBtn>
          </Controls>
        </TitleBar>
        <Client>
          <MenuBar>
            <MenuLogo><Logo s={17} /></MenuLogo>
            {["File","Edit","View","Insert","Orders","Testing","Tools","Window","Help"].map(m => <MenuItem key={m}>{m}</MenuItem>)}
            <MdiGroup>
              <MdiBtn><svg width="9" height="9"><rect x="1" y="6" width="7" height="2" fill="#8a98a8" /></svg></MdiBtn>
              <MdiBtn><svg width="10" height="10"><path d="M3.5 2.5 V.5 H9.5 V6 H7 M.5 3.5 H6.5 V9.5 H.5Z M.5 3.5 V5 H6.5 M3.5 .5 V2 H9.5" fill="none" stroke="#7f8ea0" /></svg></MdiBtn>
              <MdiBtn><svg width="10" height="10"><path d="M1 1 L9 9 M9 1 L1 9" stroke="#7f8ea0" strokeWidth="2" /></svg></MdiBtn>
            </MdiGroup>
          </MenuBar>
          <Toolbar $h={29}>
            <Grip />
            <Combo $w={95} $h={19} $ml={2}>History Mode<ComboArrow /></Combo>
            <Slot $w={14} $ml={6}><Stopper /></Slot>
            <ToolLabel $w={58} $ml={5} $size={12} $color="#a8a8a8">Start Test</ToolLabel>
            <Slot $w={18} $ml={10}><ChartEdit /></Slot>
            <Sep $ml={5} />
            <Slot $w={19} $ml={5}><GrayWindows /></Slot>
            <Sep $ml={4} />
            <Slot $w={19} $ml={4}><DocDollar /></Slot>
            <Slot $w={18} $ml={6}><FolderArrow /></Slot>
            <Slot $w={18} $ml={6}><FolderBars /></Slot>
            <Sep $ml={5} />
            <Slot $w={15} $ml={7}><GrayDoc /></Slot>
            <Slot $w={15} $ml={8}><GrayDoc><text x="3.5" y="16" fontFamily={ARIAL} fontWeight="700" fontSize="11" fill="#777">P</text></GrayDoc></Slot>
            <Slot $w={14} $ml={10}><GrayDoc><path d="M4 9 L7.5 5.5 L11 9Z M4 12 L7.5 15.5 L11 12Z" fill="#999" /></GrayDoc></Slot>
            <Sep $ml={7} />
            <Slot $w={17} $ml={5}><Magnifier plus /></Slot>
            <Slot $w={17} $ml={7}><Magnifier /></Slot>
            <Sep $ml={6} />
            <Pressed $ml={2}><PlayChart /></Pressed>
            <Slot $w={19} $ml={3}><PlusChart /></Slot>
            <Sep $ml={4} />
            <Slot $w={19} $ml={5}><DollarWin /></Slot>
            <Slot $w={18} $ml={5}><ToolWin /></Slot>
            <Slot $w={19} $ml={5}><CalcWin /></Slot>
            <Sep $ml={5} />
            <Slot $w={18} $ml={5}><Axes><path d="M4 14 L7 11 L9 12 L13 6 L16 10" stroke="#0a8a1a" strokeWidth="1.4" fill="none" /></Axes></Slot>
            <Slot $w={18} $ml={6}><Axes><path d="M6 14 H9 V6 H12" stroke="#0a8a1a" strokeWidth="2" fill="none" /></Axes></Slot>
            <Pressed $ml={2}><Axes><Cndl x={10.5} t={6.5} b={12.5} wt={2} wb={15} fill="#70e070" /></Axes></Pressed>
            <Sep $ml={3} />
            <Slot $w={19} $ml={5}><InfoBox /></Slot>
            <Slot $w={6} $ml={4}><svg width="6" height="4"><path d="M0 0 H6 L3 4Z" fill="#111" /></svg></Slot>
            <Slot $w={18} $ml={6}><DocInfo /></Slot>
            <Slot $w={17} $ml={6}><Broom /></Slot>
            <Slot $w={18} $ml={7}><Camera /></Slot>
            <Slot $w={8} $ml={24}><Chevrons /></Slot>
          </Toolbar>
          <Toolbar $h={27}>
            <Grip />
            <Slot $w={11} $ml={8}><PauseIc /></Slot>
            <SliderBox><SliderTrack /><SliderThumb /><SliderTicks /></SliderBox>
            <Combo $off $w={80} $h={20} $ml={7}>1 day<ComboArrow $off /></Combo>
            <Slot $w={16} $ml={5}><StepLeft /></Slot>
            <Slot $w={16} $ml={8}><StepRight /></Slot>
            <Slot $w={17} $ml={8}><StepUpDown /></Slot>
            <Grip $ml={9} />
            <Slot $w={18} $ml={6}><ChartPlus /></Slot>
            <Slot $w={5} $ml={6}><svg width="6" height="4"><path d="M0 0 H6 L3 4Z" fill="#111" /></svg></Slot>
            <ToolLabel $w={67} $ml={8} $size={12.3} $color="#111">Timeframe:</ToolLabel>
            <Combo $w={95} $h={20} $ml={11}>1 day<ComboArrow /></Combo>
            <Slot $w={18} $ml={4}><ClockTool /></Slot>
            <Grip $ml={9} />
            <Slot $w={12} $ml={7}><VLine /></Slot>
            <Slot $w={14} $ml={12}><HLine /></Slot>
            <Slot $w={14} $ml={10}><Trend /></Slot>
            <Slot $w={11} $ml={12}><TTool /></Slot>
            <Slot $w={17} $ml={9}><Fibo /></Slot>
            <Sep $ml={6} />
            <Slot $w={14} $ml={7}><HLines /></Slot>
            <Slot $w={16} $ml={10}><Fan /></Slot>
            <Sep $ml={6} />
            <Slot $w={17} $ml={5}><Paint /></Slot>
            <Pressed $ml={3}><Magnet /></Pressed>
            <Slot $w={8} $ml={21}><Chevrons /></Slot>
          </Toolbar>
          <ChartPane><Chart /></ChartPane>
          <TabRow>
            <TabStrip><Tab>EURUSD, Daily</Tab></TabStrip>
            <ScrollTrack>
              <ArrowBtn $dir="l" />
              <ScrollThumb />
              <ArrowBtn $dir="r" $ml={8} />
              <NavBtn $ml={7}><NavIcon dir="l" bar /></NavBtn>
              <NavBtn><NavIcon dir="l" /></NavBtn>
              <NavBtn><NavIcon dir="r" /></NavBtn>
              <NavBtn><NavIcon dir="r" bar /></NavBtn>
            </ScrollTrack>
          </TabRow>
          <StatusBar>
            <Pane $w={156} />
            <Pane $w={162}>--</Pane>
            <Pane $w={101.5}>2011.03.11 00:00</Pane>
            <Pane $w={61}>P: 1.2794</Pane>
            <Pane $w={61}>O: 1.3799</Pane>
            <Pane $w={61}>H:1.3901</Pane>
            <Pane $w={61}>L: 1.3750</Pane>
            <Pane $w={61}>C: 1.3900</Pane>
            <Pane $w={61}>V: 5044</Pane>
          </StatusBar>
        </Client>
      </Window>
    </>
  );
}
